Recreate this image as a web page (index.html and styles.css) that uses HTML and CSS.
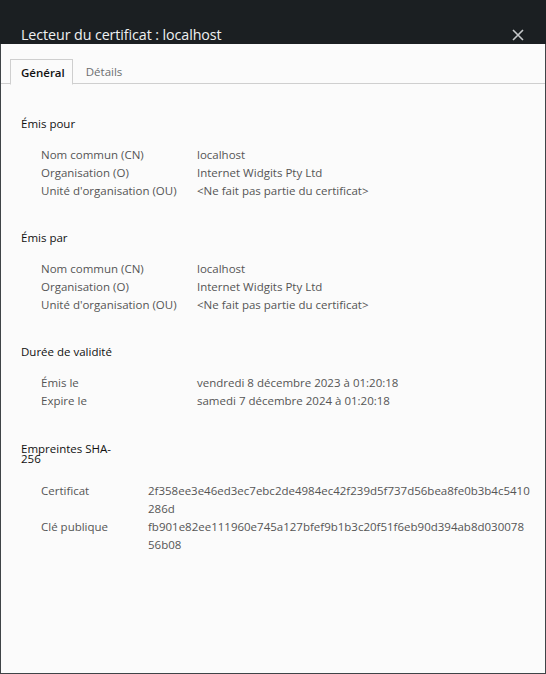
FILE: index.html
```html
<!DOCTYPE html>
<html lang="fr">
<head>
<meta charset="utf-8">
<title>Lecteur du certificat</title>
<link rel="stylesheet" href="styles.css">
</head>
<body>
<div class="window">
  <div class="titlebar">
    <span class="title">Lecteur du certificat : localhost</span>
    <span class="close" aria-label="Fermer">
      <svg width="12" height="12" viewBox="0 0 12 12"><path d="M1 1 L11 11 M11 1 L1 11" stroke="#c6c8ca" stroke-width="1.6" fill="none"/></svg>
    </span>
  </div>
  <div class="tabs">
    <div class="tab active">Général</div>
    <div class="tab">Détails</div>
  </div>
  <div class="content">
    <section class="section">
      <h2 class="heading">Émis pour</h2>
      <div class="rows">
        <div class="label">Nom commun (CN)</div><div class="value">localhost</div>
        <div class="label">Organisation (O)</div><div class="value">Internet Widgits Pty Ltd</div>
        <div class="label">Unité d'organisation (OU)</div><div class="value">&lt;Ne fait pas partie du certificat&gt;</div>
      </div>
    </section>
    <section class="section">
      <h2 class="heading">Émis par</h2>
      <div class="rows">
        <div class="label">Nom commun (CN)</div><div class="value">localhost</div>
        <div class="label">Organisation (O)</div><div class="value">Internet Widgits Pty Ltd</div>
        <div class="label">Unité d'organisation (OU)</div><div class="value">&lt;Ne fait pas partie du certificat&gt;</div>
      </div>
    </section>
    <section class="section">
      <h2 class="heading">Durée de validité</h2>
      <div class="rows">
        <div class="label">Émis le</div><div class="value">vendredi 8 décembre 2023 à 01:20:18</div>
        <div class="label">Expire le</div><div class="value">samedi 7 décembre 2024 à 01:20:18</div>
      </div>
    </section>
    <section class="section fp">
      <h2 class="heading narrow">Empreintes SHA-256</h2>
      <div class="rows hash">
        <div class="label">Certificat</div><div class="value">2f358ee3e46ed3ec7ebc2de4984ec42f239d5f737d56bea8fe0b3b4c5410286d</div>
        <div class="label">Clé publique</div><div class="value">fb901e82ee111960e745a127bfef9b1b3c20f51f6eb90d394ab8d03007856b08</div>
      </div>
    </section>
  </div>
</div>
</body>
</html>
```
FILE: styles.css
```css
* { box-sizing: border-box; }
html, body { margin: 0; padding: 0; }
body {
  width: 546px;
  height: 674px;
  font-family: "Open Sans", "Noto Sans", sans-serif;
  background: #fbfbfb;
}
.window {
  width: 546px;
  height: 674px;
  border: 1px solid #3f4447;
  border-top: none;
  background: #fbfbfb;
  display: flex;
  flex-direction: column;
}
.titlebar {
  height: 44px;
  background: #1b1f22;
  margin: 0 -1px;
  display: flex;
  align-items: flex-end;
  justify-content: space-between;
  padding: 0 22px 0 21px;
}
.title {
  color: #eef0f1;
  font-size: 14.3px;
  line-height: 18px;
  letter-spacing: -0.1px;
}
.close {
  display: flex;
  align-items: center;
  height: 18px;
}
.tabs {
  margin-top: 15px;
  height: 25px;
  border-bottom: 1px solid #cfcfcf;
  display: flex;
  padding-left: 9px;
}
.tab {
  font-size: 11.5px;
  line-height: 20px;
  padding: 3px 10px 0 13px;
  color: #6b6e70;
}
.tab.active {
  color: #111;
  font-weight: 600;
  border: 1px solid #cfcfcf;
  border-bottom: 1px solid #fbfbfb;
  margin-bottom: -1px;
  height: 26px;
  padding: 3px 7px 0 10px;
  background: #fbfbfb;
}
.content {
  padding: 31px 0 0 20px;
  font-size: 11.5px;
  line-height: 18px;
}
.section { margin-bottom: 29px; }
.heading {
  font-size: 11.5px;
  font-weight: 400;
  color: #111;
  margin: 0 0 13px 0;
  line-height: 18px;
}
.heading.narrow {
  width: 100px;
  line-height: 10px;
  padding-top: 5px;
  margin-bottom: 18px;
}
.rows {
  display: grid;
  grid-template-columns: 156px 1fr;
  padding-left: 20px;
  color: #555;
}
.rows.hash {
  grid-template-columns: 107px 382.5px;
}
.value { word-break: break-all; }
```
